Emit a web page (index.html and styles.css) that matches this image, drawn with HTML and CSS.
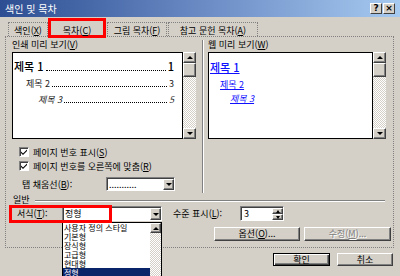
FILE: index.html
```html
<!DOCTYPE html>
<html lang="ko">

<head>
    <meta charset="UTF-8">
    <meta name="viewport" content="width=device-width, initial-scale=1.0">
    <title>색인 및 목차</title>
    <link rel="stylesheet" href="styles.css">
</head>

<body>
    <div class="dialog">
        <div class="titlebar">
            <span class="title">색인 및 목차</span>
            <div class="title-btns">
                <span class="tbtn">?</span>
                <span class="tbtn">×</span>
            </div>
        </div>

        <div class="tabs">
            <span class="tab tab-index">색인(<u>X</u>)</span>
            <span class="tab tab-toc">목차(<u>C</u>)</span>
            <span class="tab tab-fig">그림 목차(<u>F</u>)</span>
            <span class="tab tab-cite">참고 문헌 목차(<u>A</u>)</span>
        </div>

        <div class="page">
            <div class="columns">
                <div class="col col-print">
                    <div class="label">인쇄 미리 보기(<u>V</u>)</div>
                    <div class="preview-row">
                        <div class="preview">
                            <div class="toc-line lv1"><span>제목 1</span><span class="leader"></span><span>1</span></div>
                            <div class="toc-line lv2"><span>제목 2</span><span class="leader"></span><span>3</span></div>
                            <div class="toc-line lv3"><span>제목 3</span><span class="leader"></span><span>5</span></div>
                        </div>
                        <div class="vscroll">
                            <span class="sbtn"><span class="arrow up"></span></span>
                            <span class="thumb"></span>
                            <span class="track"></span>
                            <span class="sbtn"><span class="arrow down"></span></span>
                        </div>
                    </div>

                    <div class="check-row">
                        <span class="checkbox">
                            <svg width="8" height="8" viewBox="0 0 8 8"><path d="M1 3.5 L3 5.5 L7 1.5 L7 3 L3 7 L1 5 Z" fill="#000"/></svg>
                        </span>
                        페이지 번호 표시(<u>S</u>)
                    </div>
                    <div class="check-row">
                        <span class="checkbox">
                            <svg width="8" height="8" viewBox="0 0 8 8"><path d="M1 3.5 L3 5.5 L7 1.5 L7 3 L3 7 L1 5 Z" fill="#000"/></svg>
                        </span>
                        페이지 번호를 오른쪽에 맞춤(<u>R</u>)
                    </div>

                    <div class="fill-row">
                        <span class="fill-label">탭 채움선(<u>B</u>):</span>
                        <div class="combo fill-combo">
                            <span class="combo-text">...........</span>
                            <span class="combo-btn"><span class="arrow down"></span></span>
                        </div>
                    </div>
                </div>

                <div class="vsep"></div>

                <div class="col col-web">
                    <div class="label">웹 미리 보기(<u>W</u>)</div>
                    <div class="preview-row">
                        <div class="preview web">
                            <div class="web-line lv1"><a>제목 1</a></div>
                            <div class="web-line lv2"><a>제목 2</a></div>
                            <div class="web-line lv3"><a>제목 3</a></div>
                        </div>
                        <div class="vscroll">
                            <span class="sbtn"><span class="arrow up"></span></span>
                            <span class="thumb"></span>
                            <span class="track"></span>
                            <span class="sbtn"><span class="arrow down"></span></span>
                        </div>
                    </div>
                </div>
            </div>

            <div class="group-title">
                <span>일반</span>
                <div class="hline"></div>
            </div>

            <div class="general-row">
                <span class="gen-label">서식(<u>T</u>):</span>
                <div class="combo style-combo">
                    <span class="combo-text">정형</span>
                    <span class="combo-btn"><span class="arrow down"></span></span>

                    <div class="dropdown">
                        <ul class="options">
                            <li>사용자 정의 스타일</li>
                            <li>기본형</li>
                            <li>장식형</li>
                            <li>고급형</li>
                            <li>현대형</li>
                            <li class="selected">정형</li>
                        </ul>
                        <div class="list-scroll">
                            <span class="sbtn"><span class="arrow up"></span></span>
                            <span class="track"></span>
                        </div>
                    </div>
                </div>
                <span class="level-label">수준 표시(<u>L</u>):</span>
                <div class="spin">
                    <span class="spin-text">3</span>
                    <span class="spin-btns">
                        <span class="spin-btn"><span class="arrow up small"></span></span>
                        <span class="spin-btn"><span class="arrow down small"></span></span>
                    </span>
                </div>

                <div class="mark"></div>
            </div>

            <div class="btn-row">
                <button class="btn btn-options">옵션(<u>O</u>)...</button>
                <button class="btn btn-edit" disabled>수정(<u>M</u>)...</button>
            </div>
        </div>

        <div class="footer">
            <button class="btn btn-ok">확인</button>
            <button class="btn btn-cancel">취소</button>
        </div>
    </div>
</body>

</html>
```

FILE: styles.css
```css
body {
    margin: 0;
    background-color: #d4d0c8;
    font-family: "Noto Sans CJK KR", "Noto Sans", sans-serif;
    font-size: 9px;
    color: #000;
}

.dialog {
    width: 400px;
    height: 276px;
    overflow: hidden;
}

/* title bar */

.titlebar {
    height: 17px;
    display: flex;
    align-items: center;
    justify-content: space-between;
    padding: 0 5px;
    background: linear-gradient(to right, #2d4e92, #6f90c8 55%, #a6caf0);
}

.title {
    color: #fff;
    font-size: 10px;
    line-height: 17px;
}

.title-btns {
    display: flex;
    gap: 1px;
}

.tbtn {
    width: 12px;
    height: 11px;
    box-sizing: border-box;
    background-color: #d4d0c8;
    border: 1px solid;
    border-color: #fff #404040 #404040 #fff;
    font-size: 9px;
    font-weight: bold;
    line-height: 9px;
    text-align: center;
    font-family: "DejaVu Sans", sans-serif;
}

/* tabs */

.tabs {
    display: flex;
    height: 19px;
    padding-left: 8px;
}

.tab {
    margin-top: 5px;
    height: 14px;
    box-sizing: border-box;
    border: 1px dotted #808080;
    border-bottom: none;
    line-height: 15px;
    text-align: center;
}

.tab-index {
    width: 40px;
}

.tab-toc {
    width: 58px;
    height: 20px;
    margin-top: 1px;
    border: 3px solid #f00;
    line-height: 20px;
    background-color: #d4d0c8;
    position: relative;
    z-index: 2;
}

.tab-fig {
    width: 60px;
    margin-left: 1px;
}

.tab-cite {
    width: 90px;
    margin-left: 1px;
}

/* page */

.page {
    margin: 0 6px 0 5px;
    border: 1px dotted #808080;
    padding: 2px 1px 6px 6px;
}

.columns {
    display: flex;
    height: 153px;
}

.col-print {
    width: 184px;
}

.col-web {
    width: 178px;
    margin-left: 4px;
}

.vsep {
    margin-left: 6px;
    margin-top: 1px;
    height: 153px;
    border-left: 1px solid #808080;
    border-right: 1px solid #fff;
}

.label {
    height: 12px;
    line-height: 12px;
}

.preview-row {
    display: flex;
    height: 87px;
    margin-top: 1px;
}

.preview {
    flex: 1;
    background-color: #fff;
    border: 1px solid #000;
    padding: 6px 8px 0 1px;
}

.toc-line {
    display: flex;
    align-items: baseline;
}

.toc-line .leader {
    flex: 1;
    border-bottom: 1px dotted #000;
    margin: 0 2px;
}

.toc-line.lv1 {
    font-size: 11px;
    font-weight: 500;
    height: 14px;
    line-height: 14px;
}

.toc-line.lv2 {
    height: 12px;
    line-height: 12px;
    margin-top: 5px;
    padding-left: 12px;
    color: #222;
}

.toc-line.lv3 {
    height: 12px;
    line-height: 12px;
    margin-top: 4px;
    padding-left: 24px;
    font-style: italic;
    color: #222;
}

.preview.web {
    padding-right: 0;
}

.web-line a {
    color: #1010ff;
    text-decoration: underline;
}

.web-line.lv1 {
    font-size: 11px;
    font-weight: 500;
    height: 14px;
    line-height: 14px;
    margin-top: 1px;
}

.web-line.lv2 {
    height: 12px;
    line-height: 12px;
    margin-top: 5px;
    padding-left: 10px;
}

.web-line.lv3 {
    height: 12px;
    line-height: 12px;
    margin-top: 2px;
    padding-left: 20px;
    font-style: italic;
}

/* scroll bars */

.vscroll {
    width: 13px;
    display: flex;
    flex-direction: column;
}

.sbtn,
.thumb,
.combo-btn,
.spin-btn {
    display: flex;
    align-items: center;
    justify-content: center;
    box-sizing: border-box;
    background-color: #d4d0c8;
    border: 1px solid;
    border-color: #fff #404040 #404040 #fff;
    box-shadow: inset -1px -1px #808080;
}

.sbtn {
    height: 11px;
}

.thumb {
    height: 14px;
}

.track {
    flex: 1;
    background-image: repeating-conic-gradient(#fff 0 25%, #d4d0c8 0 50%);
    background-size: 2px 2px;
}

.arrow {
    width: 0;
    height: 0;
    border-left: 3px solid transparent;
    border-right: 3px solid transparent;
}

.arrow.up {
    border-bottom: 3px solid #000;
}

.arrow.down {
    border-top: 3px solid #000;
}

.arrow.small {
    border-left-width: 2px;
    border-right-width: 2px;
}

/* check boxes */

.check-row {
    display: flex;
    align-items: center;
    height: 14px;
    padding-left: 7px;
}

.preview-row + .check-row {
    margin-top: 6px;
}

.checkbox {
    width: 10px;
    height: 10px;
    box-sizing: border-box;
    margin-right: 4px;
    background-color: #fff;
    border: 1px solid;
    border-color: #808080 #fff #fff #808080;
    box-shadow: inset 1px 1px #404040;
    display: flex;
    align-items: center;
    justify-content: center;
}

.fill-row {
    display: flex;
    align-items: center;
    height: 16px;
    margin-top: 3px;
    padding-left: 10px;
}

.fill-label {
    width: 84px;
}

/* combos */

.combo {
    display: flex;
    box-sizing: border-box;
    background-color: #fff;
    border: 1px solid;
    border-color: #808080 #fff #fff #808080;
    box-shadow: inset 1px 1px #404040;
    padding: 1px 0 0 1px;
}

.combo-text {
    flex: 1;
    padding-left: 1px;
    line-height: 12px;
}

.combo-btn {
    width: 11px;
}

.fill-combo {
    width: 69px;
    height: 14px;
}

/* general group */

.group-title {
    display: flex;
    align-items: center;
    height: 12px;
    margin-top: 1px;
    padding-left: 1px;
}

.hline {
    flex: 1;
    margin: 3px 7px 0 5px;
    border-top: 1px solid #808080;
    border-bottom: 1px solid #fff;
}

.general-row {
    display: flex;
    align-items: center;
    height: 15px;
    margin-top: 1px;
    padding-left: 5px;
    position: relative;
}

.gen-label {
    width: 45px;
}

.style-combo {
    width: 100px;
    height: 15px;
    position: relative;
}

.dropdown {
    position: absolute;
    left: -1px;
    top: 15px;
    width: 100px;
    height: 60px;
    box-sizing: border-box;
    background-color: #fff;
    border: 1px solid #000;
    display: flex;
    z-index: 3;
}

.options {
    flex: 1;
    list-style: none;
    margin: 0;
    padding: 0;
}

.options li {
    height: 9px;
    line-height: 9px;
    font-size: 8px;
    padding-left: 1px;
    white-space: nowrap;
}

.options li.selected {
    background-color: #0a246a;
    color: #fff;
}

.list-scroll {
    width: 11px;
    display: flex;
    flex-direction: column;
}

.list-scroll .sbtn {
    height: 10px;
}

.level-label {
    width: 67px;
    margin-left: 11px;
}

.spin {
    display: flex;
    width: 44px;
    height: 15px;
    box-sizing: border-box;
    background-color: #fff;
    border: 1px solid;
    border-color: #808080 #fff #fff #808080;
    box-shadow: inset 1px 1px #404040;
    padding: 1px 0 0 1px;
}

.spin-text {
    flex: 1;
    padding-left: 2px;
    line-height: 12px;
}

.spin-btns {
    width: 11px;
    display: flex;
    flex-direction: column;
}

.spin-btn {
    flex: 1;
}

.mark {
    position: absolute;
    left: -3px;
    top: -1px;
    width: 103px;
    height: 18px;
    box-sizing: border-box;
    border: 3px solid #f00;
    z-index: 4;
}

/* buttons */

.btn {
    box-sizing: border-box;
    height: 14px;
    padding: 0;
    font-family: inherit;
    font-size: 9px;
    line-height: 12px;
    color: #000;
    background-color: #d4d0c8;
    border: 1px solid;
    border-color: #fff #404040 #404040 #fff;
    box-shadow: inset -1px -1px #808080;
}

.btn-row {
    display: flex;
    justify-content: flex-end;
    gap: 4px;
    margin-top: 6px;
    padding-right: 1px;
}

.btn-options {
    width: 86px;
}

.btn-edit {
    width: 87px;
    color: #808080;
    text-shadow: 1px 1px #fff;
}

.footer {
    display: flex;
    justify-content: flex-end;
    gap: 7px;
    margin-top: 5px;
    padding-right: 7px;
}

.btn-ok {
    width: 57px;
    height: 13px;
    border: 1px solid #000;
    box-shadow: inset 1px 1px #fff, inset -1px -1px #404040, inset -2px -2px #808080;
}

.btn-cancel {
    width: 56px;
    height: 13px;
}
```
